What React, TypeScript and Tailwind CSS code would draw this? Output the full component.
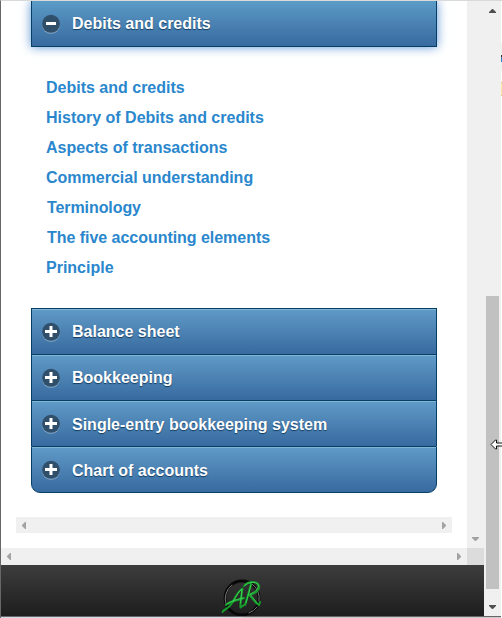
import React from "react";

const links = [
  { text: "Debits and credits", className: "" },
  { text: "History of Debits and credits", className: "" },
  { text: "Aspects of transactions", className: "" },
  { text: "Commercial understanding", className: "" },
  { text: "Terminology", className: "pl-px tracking-[-0.08px]" },
  { text: "The five accounting elements", className: "pl-px tracking-[-0.035px]" },
  { text: "Principle", className: "" },
];

const sections = [
  { text: "Balance sheet", className: "" },
  { text: "Bookkeeping", className: "" },
  { text: "Single-entry bookkeeping system", className: "pt-0.5" },
  { text: "Chart of accounts", className: "pt-0.5" },
];

function Toggle({ open = false }: { open?: boolean }) {
  return (
    <svg width="20" height="20" viewBox="0 0 20 20" className="shrink-0">
      <circle cx="10" cy="10.8" r="9" fill="#86a9c8" />
      <circle cx="10" cy="9.8" r="9" fill="#304f6b" />
      <path
        d={open ? "M5 8h10v3H5z" : "M4 8h4.5V4h3v4H16v3h-4.5v4h-3v-4H4z"}
        fill="#fff"
      />
    </svg>
  );
}

function Arrow({ dir, color }: { dir: "up" | "down" | "left" | "right"; color: string }) {
  const vertical = dir === "up" || dir === "down";
  const paths = {
    up: "M3 0H4V1H5V2H6V3H7V4H0V3H1V2H2V1H3z",
    down: "M0 0H7V1H6V2H5V3H4V4H3V3H2V2H1V1H0z",
    left: "M4 0V7H3V6H2V5H1V4H0V3H1V2H2V1H3V0z",
    right: "M0 0H1V1H2V2H3V3H4V4H3V5H2V6H1V7H0z",
  };
  return (
    <svg width={vertical ? 7 : 4} height={vertical ? 4 : 7} viewBox={vertical ? "0 0 7 4" : "0 0 4 7"} className="block shrink-0">
      <path d={paths[dir]} fill={color} stroke={color} strokeWidth="0.5" />
    </svg>
  );
}

function Heading({ text, last, className }: { text: string; last: boolean; className: string }) {
  return (
    <div
      className={`flex h-full items-center border-[#063f66] bg-linear-to-b from-[#609bc8] to-[#386a9f] pl-[9px] shadow-[inset_0_1px_#83b5d5] ${
        last ? "rounded-b-[9px] border-x border-y" : "border-x border-t"
      }`}
    >
      <Toggle />
      <span className={`ml-[11px] text-white [text-shadow:0_1px_1px_#123c60] ${className}`}>{text}</span>
    </div>
  );
}

export default function App() {
  return (
    <div className="relative flex h-[618px] w-[502px] overflow-hidden border-l border-t border-l-[#66676a] border-t-[#d9d9d9] bg-white font-['Liberation_Sans',Arial,sans-serif] text-base font-bold leading-5">
      <div className="flex w-[483px] flex-col">
        <div className="flex h-[547px]">
          <main className="flex w-[466px] flex-col">
            <div className="ml-[30px] flex h-[46px] w-[406px] shrink-0 items-center border-x border-b border-[#063f66] bg-linear-to-b from-[#5c9bc7] to-[#386a9f] pl-[9px] shadow-[0_0_10px_#5b94d6]">
              <Toggle open />
              <span className="ml-[11px] text-white [text-shadow:0_1px_1px_#123c60]">Debits and credits</span>
            </div>
            <nav className="ml-[45px] flex h-[261px] shrink-0 flex-col gap-2.5 pt-[31px] text-[#2a87cd]">
              {links.map((l) => (
                <a key={l.text} className={l.className}>{l.text}</a>
              ))}
            </nav>
            <div className="ml-[30px] grid h-[185px] w-[406px] shrink-0 grid-rows-[46px_46px_46px_47px]">
              {sections.map((s, i) => (
                <Heading key={s.text} text={s.text} className={s.className} last={i === 3} />
              ))}
            </div>
            <div className="ml-[15px] mt-6 flex h-4 w-[436px] items-center justify-between bg-[#f0f0f0] px-1.5">
              <Arrow dir="left" color="#a3a3a3" />
              <Arrow dir="right" color="#a3a3a3" />
            </div>
          </main>
          <div className="flex w-[17px] flex-col items-center justify-end bg-[#f0f0f0] pb-[7px]">
            <Arrow dir="down" color="#a3a3a3" />
          </div>
        </div>
        <div className="flex h-[17px]">
          <div className="flex w-[466px] items-center justify-between bg-[#f0f0f0] px-1.5">
            <Arrow dir="left" color="#a3a3a3" />
            <Arrow dir="right" color="#a3a3a3" />
          </div>
          <div className="w-[17px] bg-[#dcdcdc]" />
        </div>
        <footer className="flex h-[51px] bg-linear-to-b from-[#3d3d3d] to-[#1e1e1e] pl-[217px] pt-[11px]">
          <svg width="48" height="40" viewBox="0 0 48 40" fill="none" strokeLinecap="round" strokeLinejoin="round">
            <circle cx="24" cy="22" r="17" stroke="#080808" strokeWidth="2.8" />
            <path d="M8 28A17 17 0 0 1 14 9M34 8A17 17 0 0 1 41 25M31 37A17 17 0 0 0 39 31" stroke="#777" strokeWidth="1" />
            <g stroke="#159c2c" strokeWidth="2">
              <path d="M4.5 36C7 32 10 34 14 27C18 20 20 15 24.5 12.5C24 18 22 24 22.5 31.5L26 29" />
              <path d="M8 29C13 24 20 25 26 22" />
              <path d="M27 29C29 23 31 15 33 8M26 10C30 5 37 5 40 8C44 13 37 18 31 19C35 22 37 27 41 29L42 26" />
            </g>
            <path d="M15 26Q20 16 24 13L22.5 27M28 27L33 9M27 9Q35 4 40 8Q42 14 32 18L39 27M9 28Q15 24 25 22" stroke="#43df58" strokeWidth="0.8" />
          </svg>
        </footer>
        <div className="h-px shrink-0 bg-[#666]" />
        <div className="h-px shrink-0 bg-linear-to-r from-[#d5dbe8] from-50% to-[#cccccc] to-50%" />
      </div>
      <div className="flex w-[17px] flex-col items-center bg-[#f0f0f0] pt-2">
        <Arrow dir="up" color="#505050" />
        <div className="mt-[283px] h-[293px] w-[13px] shrink-0 bg-[#c1c1c1]" />
        <div className="mt-4"><Arrow dir="down" color="#505050" /></div>
        <div className="mt-[7px] h-0.5 w-full shrink-0 border-t border-[#666] bg-[#cccccc]" />
      </div>
      <div className="flex w-px flex-col">
        <div className="h-[42px] bg-white" />
        <div className="h-3 bg-[#f0f0f0]" />
        <div className="h-0.5 bg-[#333]" />
        <div className="h-[5px] bg-[#2f80bd]" />
        <div className="h-[9px] bg-[#f0f0f0]" />
        <div className="h-[11px] bg-white" />
        <div className="h-3.5 border-y border-[#dbc77d] bg-[#ffe8a0]" />
      </div>
      <svg className="absolute left-[489px] top-[438px]" width="12" height="11" viewBox="0 0 12 11">
        <path d="M1 5.5L5.5 1H6.5V4H13V7H6.5V10H5.5z" fill="#fff" stroke="#111" />
      </svg>
    </div>
  );
}
